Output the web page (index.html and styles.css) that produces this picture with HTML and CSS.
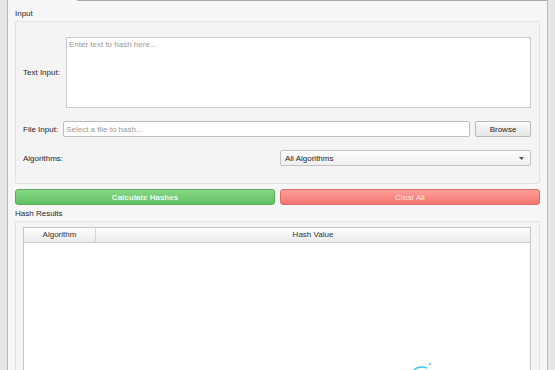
FILE: index.html
```html
<!doctype html>
<html lang="en">
<head>
  <meta charset="utf-8" />
  <title>Hash Calculator</title>
  <link rel="stylesheet" href="styles.css">
</head>
<body>
  <div class="frame">
    <div class="pane">
      <div class="tabedge"></div>
      <div class="content">
        <div class="gtitle">Input</div>
        <div class="group group-input">
          <div class="row row-text">
            <label for="text">Text Input:</label>
            <textarea id="text" placeholder="Enter text to hash here..."></textarea>
          </div>
          <div class="row row-file">
            <label for="file">File Input:</label>
            <input id="file" type="text" placeholder="Select a file to hash..." />
            <button class="browse" type="button">Browse</button>
          </div>
          <div class="row-algo">
            <label for="algo">Algorithms:</label>
            <div class="combo" id="algo">
              <span>All Algorithms</span>
              <svg class="arrow" width="5" height="3" viewBox="0 0 5 3"><path d="M0 0h5L2.5 3z" fill="#555"/></svg>
            </div>
          </div>
        </div>

        <div class="actions">
          <button class="btn btn-go" type="button">Calculate Hashes</button>
          <button class="btn btn-clear" type="button">Clear All</button>
        </div>

        <div class="gtitle gtitle-results">Hash Results</div>
        <div class="group group-results">
          <div class="table">
            <div class="thead">
              <div class="th th-alg">Algorithm</div>
              <div class="th th-hash">Hash Value</div>
            </div>
            <div class="tbody"></div>
          </div>
        </div>
      </div>
    </div>
  </div>

  <!-- watermark swirl peeking in at the bottom -->
  <svg class="mark" width="24" height="12" viewBox="0 0 24 12">
    <path d="M2 11c3-4 9-5 14-3" stroke="#3cc8e8" stroke-width="1.6" fill="none"/>
    <circle cx="19" cy="4" r="1" fill="#3cc8e8"/>
  </svg>
</body>
</html>
```

FILE: styles.css
```css
*,*::before,*::after{box-sizing:border-box}
html,body{height:100%}
body{margin:0;background:#e6e6e6;font-family:"Liberation Sans",Arial,sans-serif;font-size:8px;color:#1e1e30;overflow:hidden;position:relative}

.frame{padding-left:7px;height:370px}
.pane{width:541px;height:370px;background:#f7f7f7;border-left:1px solid #b8b8b8;border-right:1px solid #b8b8b8}
.tabedge{height:1px;margin-left:69px;background:#ababab}
.content{padding:0 7px}

.gtitle{margin-top:7px;height:12px;line-height:12px;color:#1e1e30}
.gtitle-results{margin-top:3px}
.group{margin-top:1px;border:1px solid #e2e2e2;border-radius:2px;background:#f4f4f4}

.group-input{padding:15px 8px 17px 7px;display:flex;flex-direction:column;gap:13px}
.row{display:flex;align-items:center}
label{white-space:nowrap}
.row-text{gap:6px}
.row-file{gap:5px;height:16px}
.row-algo{display:grid;grid-template-columns:1fr 1fr;column-gap:6px;align-items:center;height:16px}

textarea{flex:1;height:71px;resize:none;border:1px solid #cacaca;background:#fff;padding:2px 2px;font:inherit;color:#222;outline:none}
input{flex:1;height:16px;border:1px solid #bdbdbd;border-radius:2px;background:#fff;padding:0 2px;font:inherit;color:#222;outline:none}
::placeholder{color:#9a9a9a}

.browse{width:56px;height:16px;border:1px solid #b9b9b9;border-radius:2px;background:linear-gradient(#fafafa,#e6e6e6);font:inherit;color:#222;padding:0}

.combo{height:16px;display:flex;align-items:center;justify-content:space-between;padding:0 6px 0 4px;border:1px solid #c2c2c2;border-radius:2px;background:linear-gradient(#fdfdfd,#efefef);color:#222}
.arrow{display:block}

.actions{margin-top:5px;display:flex;gap:5px}
.btn{flex:1;height:16px;padding:0;border-radius:3px;font:inherit}
.btn-go{border:1px solid #5aac5a;background:linear-gradient(#86d886,#62c062);color:#eef9ee;font-weight:bold}
.btn-clear{border:1px solid #dc6c68;background:linear-gradient(#ff9f9b,#f47470);color:#ffe3e2}

.group-results{padding:5px 8px 0 7px;height:160px;border-bottom:none}
.table{height:100%;border:1px solid #c6c6c6;border-bottom:none;background:#fff;display:flex;flex-direction:column}
.thead{display:flex;height:15px;border-bottom:1px solid #cfcfcf;background:linear-gradient(#fdfdfd,#ececec)}
.th{line-height:14px;text-align:center;color:#333}
.th-alg{width:72px;border-right:1px solid #d6d6d6}
.th-hash{flex:1}
.tbody{flex:1}

.mark{position:absolute;left:411px;top:360px}
```
